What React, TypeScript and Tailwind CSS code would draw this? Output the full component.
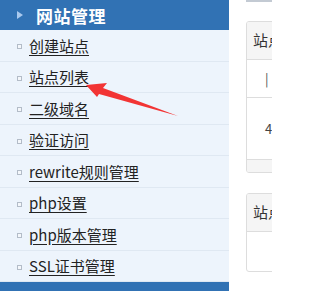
import React from "react";

const items = [
  "创建站点",
  "站点列表",
  "二级域名",
  "验证访问",
  "rewrite规则管理",
  "php设置",
  "php版本管理",
  "SSL证书管理",
];

export default function App() {
  return (
    <div
      className="relative w-[272px] h-[291px] overflow-hidden bg-white flex"
      style={{ fontFamily: '"Noto Sans CJK SC", "Noto Sans", sans-serif' }}
    >
      {/* Sidebar */}
      <div className="w-[229px] shrink-0 flex flex-col bg-[#edf4fc]">
        <div className="h-[30px] bg-[#3172b4] flex items-center pl-[17px]">
          <svg width="6" height="8" viewBox="0 0 6 8">
            <polygon points="0,0 6,4 0,8" fill="#a9c9ee" />
          </svg>
          <span className="ml-[13px] text-white font-bold text-[17px] leading-none tracking-[0.5px]">
            网站管理
          </span>
        </div>
        {items.map((t) => (
          <div
            key={t}
            className="h-[31.5px] shrink-0 flex items-center pl-[17px] border-b border-[#dfe8f2]"
          >
            <span className="w-[5px] h-[5px] border border-[#b3bcc8] bg-[#f4f7fb] mt-[3px]" />
            <span className="ml-[7px] text-[15px] leading-none text-[#222] underline underline-offset-[3px] whitespace-nowrap">
              {t}
            </span>
          </div>
        ))}
        <div className="flex-1 bg-[#3172b4]" />
      </div>

      {/* Right content */}
      <div className="flex-1 flex flex-col pl-[17px] min-w-0">
        <div className="h-[2px] bg-[#c3cad3]" />
        <div className="mt-[19px] w-[200px] h-[152px] border border-[#dddddd] rounded-[3px] flex flex-col overflow-hidden">
          <div className="h-[38px] bg-[#f5f5f5] border-b border-[#dddddd] flex items-center pl-[6px] text-[15px] text-[#333] whitespace-nowrap">
            站点列表
          </div>
          <div className="h-[38px] border-b border-[#dddddd] flex items-center pl-[18px] text-[13px] text-[#555]">
            |
          </div>
          <div className="flex-1 flex items-center pl-[18px] text-[13px] text-[#444]">
            4
          </div>
          <div className="h-[13px] bg-[#f5f5f5] border-t border-[#dddddd]" />
        </div>
        <div className="mt-[20px] w-[200px] h-[79px] border border-[#dddddd] rounded-[3px] flex flex-col overflow-hidden">
          <div className="h-[38px] bg-[#f5f5f5] border-b border-[#dddddd] flex items-center pl-[6px] text-[15px] text-[#333] whitespace-nowrap">
            站点设置
          </div>
          <div className="flex-1" />
        </div>
      </div>

      {/* Red annotation arrow */}
      <svg
        className="absolute left-0 top-0 pointer-events-none"
        width="272"
        height="291"
        viewBox="0 0 272 291"
      >
        <polygon
          points="86,85 107,83 103,88 178,116 99,94 97,97"
          fill="#f23434"
        />
      </svg>
    </div>
  );
}
